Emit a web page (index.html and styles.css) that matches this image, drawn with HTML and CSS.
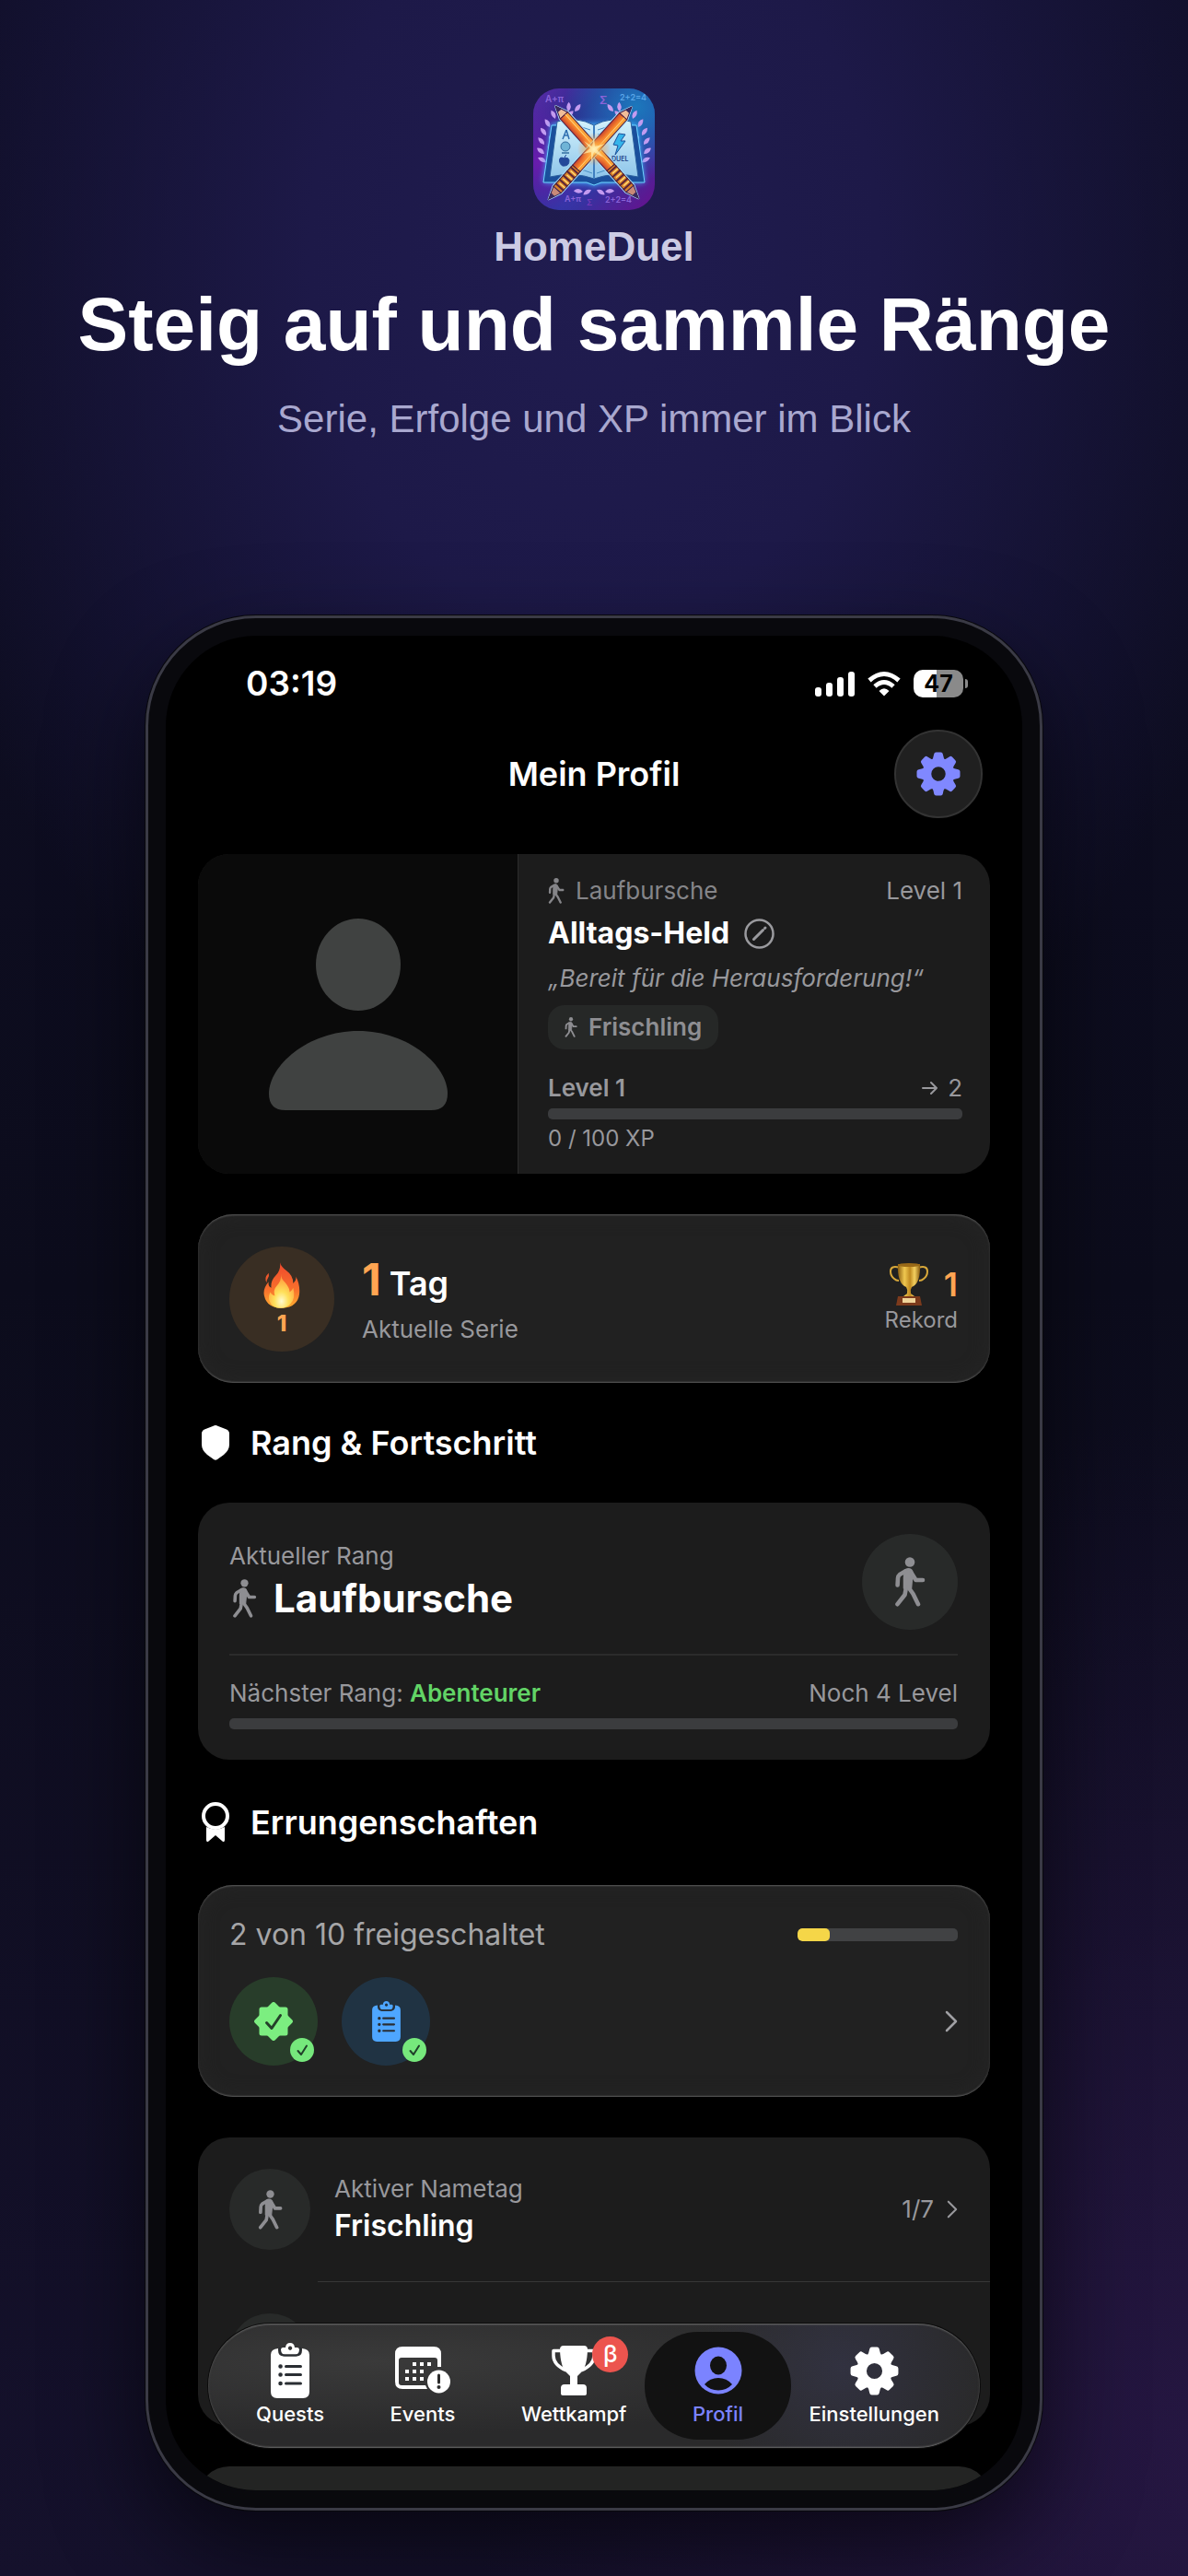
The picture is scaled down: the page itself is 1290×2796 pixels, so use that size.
FILE: index.html
```html
<!DOCTYPE html>
<html lang="de">
<head>
    <meta charset="UTF-8">
    <meta name="viewport" content="width=device-width, initial-scale=1.0">
    <title>HomeDuel</title>
    <link rel="stylesheet" href="styles.css">
</head>
<body>
    <!-- shared icons -->
    <svg class="sprite" aria-hidden="true">
        <symbol id="walk" viewBox="0 0 34 54">
            <circle cx="17" cy="5.500" r="5.300" fill="currentColor"/>
            <path d="M11.500 14 Q14 12 17 13 Q20 14 20 18 L18.500 34 L10.500 34 L10.500 22 Z" fill="currentColor" stroke="currentColor" stroke-width="1.500" stroke-linejoin="round"/>
            <g fill="none" stroke="currentColor" stroke-width="4.600" stroke-linecap="round" stroke-linejoin="round">
                <path d="M12 15.500 L6 19 Q4.200 20.500 4 23 L3.600 30.500"/>
                <path d="M18.500 17 L23.500 25 H31"/>
                <path d="M13 33 L11.500 41 L3.500 51.200"/>
                <path d="M15.500 33 L20.500 40 L26 51.200"/>
            </g>
        </symbol>
        <symbol id="gear" viewBox="-24 -24 48 48">
            <circle r="12.500" fill="none" stroke="currentColor" stroke-width="9.500"/>
            <g fill="currentColor">
                <path id="tooth" d="M-7.500 -14.500 Q-5.500 -17 -4.800 -21.500 Q-4.500 -23.500 -2.500 -23.500 H2.500 Q4.500 -23.500 4.800 -21.500 Q5.500 -17 7.500 -14.500 Z"/>
                <use href="#tooth" transform="rotate(45)"/>
                <use href="#tooth" transform="rotate(90)"/>
                <use href="#tooth" transform="rotate(135)"/>
                <use href="#tooth" transform="rotate(180)"/>
                <use href="#tooth" transform="rotate(225)"/>
                <use href="#tooth" transform="rotate(270)"/>
                <use href="#tooth" transform="rotate(315)"/>
            </g>
        </symbol>
        <symbol id="clipboard" viewBox="0 0 42 60">
            <path d="M8 6 V8 Q8 14.500 14 14.500 H28 Q34 14.500 34 8 V6 Q42 6.500 42 13 V53 Q42 60 35 60 H7 Q0 60 0 53 V13 Q0 6.500 8 6 Z" fill="currentColor"/>
            <path fill-rule="evenodd" d="M16 5 Q16.500 0 21 0 Q25.500 0 26 5 H29 Q31 5 31 7.500 Q31 12.500 27 12.500 H15 Q11 12.500 11 7.500 Q11 5 13 5 Z M21 3.500 a2.200 2.200 0 1 0 .1 0 Z" fill="currentColor"/>
            <g class="cut" stroke-width="3" stroke-linecap="round">
                <path d="M10 5.500 V7.500 Q10 13.500 15 13.500 H27 Q32 13.500 32 7.500 V5.500" stroke-width="2"/>
                <path d="M16.500 25.500 H32.500 M16.500 34.500 H32.500 M16.500 44 H32.500"/>
                <path d="M10.500 25.500 h.1 M10.500 34.500 h.1 M10.500 44 h.1" stroke-width="4.500"/>
            </g>
        </symbol>
        <symbol id="check" viewBox="0 0 26 26">
            <circle cx="13" cy="13" r="13" fill="#76e87c"/>
            <path d="M8.500 14 L12 18 L18 8.500" fill="none" stroke="#20402a" stroke-width="2" stroke-linecap="round" stroke-linejoin="round"/>
        </symbol>
        <symbol id="chevron" viewBox="0 0 14 24">
            <path d="M2 2 L12 12 L2 22" fill="none" stroke="currentColor" stroke-width="2.500" stroke-linecap="round" stroke-linejoin="round"/>
        </symbol>
    </svg>

    <div class="page">
        <header class="hero">
            <svg class="logo" viewBox="0 0 132 132" role="img" aria-label="HomeDuel Logo">
                <defs>
                    <linearGradient id="bg" x1="0" y1="0" x2="1" y2="1">
                        <stop offset="0" stop-color="#5a2ba8"/>
                        <stop offset=".3" stop-color="#2c2a8c"/>
                        <stop offset=".6" stop-color="#2b3aa5"/>
                        <stop offset="1" stop-color="#6a0f8c"/>
                    </linearGradient>
                    <radialGradient id="cyan" cx=".85" cy=".15" r=".6">
                        <stop offset="0" stop-color="#1c78bc"/>
                        <stop offset="1" stop-color="#1c78bc" stop-opacity="0"/>
                    </radialGradient>
                    <radialGradient id="violet" cx=".05" cy=".6" r=".5">
                        <stop offset="0" stop-color="#6a1cae"/>
                        <stop offset="1" stop-color="#6a1cae" stop-opacity="0"/>
                    </radialGradient>
                    <radialGradient id="spark">
                        <stop offset="0" stop-color="#fff6c8"/>
                        <stop offset=".35" stop-color="#ffb84a" stop-opacity=".7"/>
                        <stop offset="1" stop-color="#ff8c3a" stop-opacity="0"/>
                    </radialGradient>
                    <linearGradient id="sheet" x1="0" y1="0" x2="0" y2="1">
                        <stop offset="0" stop-color="#d4f2fb"/>
                        <stop offset="1" stop-color="#8cc4ea"/>
                    </linearGradient>
                    <linearGradient id="wood" x1="0" y1="0" x2="0" y2="1">
                        <stop offset="0" stop-color="#ffb33c"/>
                        <stop offset=".5" stop-color="#f5802a"/>
                        <stop offset="1" stop-color="#c8432f"/>
                    </linearGradient>
                    <filter id="glow" x="-20%" y="-20%" width="140%" height="140%">
                        <feGaussianBlur stdDeviation="3"/>
                    </filter>
                    <clipPath id="tile"><rect width="132" height="132" rx="28"/></clipPath>
                    <g id="pencil">
                        <path d="M0 0 L14 -6 H121 L135 0 L121 6 H14 Z" fill="#9fe0ff" stroke="#a9e4ff" stroke-width="2" stroke-linejoin="round"/>
                        <path d="M0 0 L14 -5.500 V5.500 Z" fill="#f0bd98" stroke="#3a1c4e" stroke-width="1"/>
                        <path d="M0 0 L7 -3 V3 Z" fill="#3a2a5c"/>
                        <path d="M14 -5.500 H90 V5.500 H14 Z" fill="url(#wood)" stroke="#5a1f3c" stroke-width="1"/>
                        <path d="M14 -2 H90" stroke="#ffd27a" stroke-width="1"/>
                        <path d="M90 -5.500 H121 V5.500 H90 Z" fill="#d9822a" stroke="#4a1c34" stroke-width="1"/>
                        <path d="M93 -6 V6 M99 -6 V6 M105 -6 V6 M111 -6 V6 M117 -6 V6" stroke="#5a2438" stroke-width="2"/>
                        <path d="M96 -5 V3 M102 -5 V3 M108 -5 V3 M114 -5 V3" stroke="#ffd873" stroke-width="1.500"/>
                        <path d="M121 -5.500 L135 0 L121 5.500 Z" fill="#c98a78" stroke="#3a1c4e" stroke-width="1"/>
                        <path d="M128 -3 L135 0 L128 3 Z" fill="#3a2a5c"/>
                    </g>
                    <path id="leaf" d="M0 0 Q-5 -4 -2 -10 Q4 -6 0 0 Z"/>
                    <g id="laurel" fill="#c49bf0">
                        <use href="#leaf" transform="translate(45 25) rotate(50)"/>
                        <use href="#leaf" transform="translate(38 25) rotate(15)"/>
                        <use href="#leaf" transform="translate(36 31) rotate(60)"/>
                        <use href="#leaf" transform="translate(24 33) rotate(-15)"/>
                        <use href="#leaf" transform="translate(18 42) rotate(-20)"/>
                        <use href="#leaf" transform="translate(14 51) rotate(-25)"/>
                        <use href="#leaf" transform="translate(12 61) rotate(-30)"/>
                        <use href="#leaf" transform="translate(12 71) rotate(-40)"/>
                        <use href="#leaf" transform="translate(14 80) rotate(-50)"/>
                        <use href="#leaf" transform="translate(18 58) rotate(25)"/>
                        <use href="#leaf" transform="translate(17 68) rotate(20)"/>
                        <use href="#leaf" transform="translate(17 78) rotate(15)"/>
                        <use href="#leaf" transform="translate(54 112) rotate(-75)"/>
                        <use href="#leaf" transform="translate(63 110) rotate(-110)"/>
                    </g>
                </defs>
                <g clip-path="url(#tile)">
                    <rect width="132" height="132" fill="url(#bg)"/>
                    <rect width="132" height="132" fill="url(#cyan)"/>
                    <rect width="132" height="132" fill="url(#violet)"/>
                    <g class="logo-text" fill="#8a63d8">
                        <text x="13" y="15" font-size="10">A+π</text>
                        <text x="72" y="17" font-size="12">Σ</text>
                        <text x="94" y="13" font-size="9" fill="#5aa6e8">2+2=4</text>
                        <text x="34" y="123" font-size="9">A+π</text>
                        <text x="58" y="127" font-size="9" fill="#7438b8">Σ</text>
                        <text x="78" y="124" font-size="9">2+2=4</text>
                    </g>
                    <use href="#laurel"/>
                    <use href="#laurel" transform="matrix(-1 0 0 1 132 0)"/>
                    <path d="M20 38 L11 102 L60 103 L66 106 L72 103 L121 102 L112 38 Z" fill="#3fb4ff" filter="url(#glow)"/>
                    <path d="M20 40 L11 102 L58 102 L66 105 L74 102 L121 102 L112 40 Z" fill="#1a4f9c" stroke="#6fd4ff" stroke-width="1"/>
                    <path d="M26 36 Q48 30 66 40 V98 Q44 90 18 96 Z" fill="url(#sheet)" stroke="#2a5f9e" stroke-width="1"/>
                    <path d="M106 36 Q84 30 66 40 V98 Q88 90 114 96 Z" fill="url(#sheet)" stroke="#2a5f9e" stroke-width="1"/>
                    <path d="M66 40 V98" stroke="#3f7fc0" stroke-width="2"/>
                    <g fill="none" stroke="#4a8fc4" stroke-width="1">
                        <path d="M44 42 Q54 41 62 45 M88 42 Q78 41 70 45 M86 46 Q78 46 70 50 M50 52 L62 54 M46 88 Q56 88 64 92 M86 88 Q78 88 69 92"/>
                    </g>
                    <path d="M36 45 L32 55 M36 45 L39 55 M33 51 H38" fill="none" stroke="#2f6fb0" stroke-width="1.500"/>
                    <circle cx="35" cy="63" r="5" fill="#6fb4d6" stroke="#356fa0" stroke-width="1"/>
                    <path d="M31 70 H39" stroke="#356fa0" stroke-width="1.500"/>
                    <path d="M34 76 Q28 73 28.500 79 Q30 85 34 84 Q39 84 39 78 Q38 74 34 76 Q34 73 36 72" fill="#23489a" stroke="#23489a" stroke-width="1"/>
                    <path d="M93 49 L87 61 L92 62 L89 72 L100 57 L95 57 L100 50 Z" fill="#35b4ea" stroke="#1b4f9a" stroke-width="1"/>
                    <text class="logo-text" x="85" y="79" font-size="7" fill="#1b3f86">DUEL</text>
                    <use href="#pencil" transform="translate(24 19) rotate(48)"/>
                    <use href="#pencil" transform="translate(107 20) rotate(132)"/>
                    <circle cx="66" cy="66" r="18" fill="url(#spark)"/>
                    <path d="M66 52 L67 63 L78 60 L69 66 L76 75 L66 69 L63 80 L63 69 L54 71 L62 65 L55 57 L64 63 Z" fill="#fff0b0" opacity=".7"/>
                </g>
            </svg>
            <p class="brand">HomeDuel</p>
            <h1>Steig auf und sammle Ränge</h1>
            <p class="tagline">Serie, Erfolge und XP immer im Blick</p>
        </header>

        <main class="phone">
            <div class="screen">
                <div class="status">
                    <span class="time">03:19</span>
                    <div class="status-icons">
                        <svg width="43" height="28" viewBox="0 0 43 28" fill="#fff">
                            <rect y="18" width="7" height="10" rx="3"/>
                            <rect x="12" y="13" width="7" height="15" rx="3"/>
                            <rect x="24" y="7" width="7" height="21" rx="3"/>
                            <rect x="36" y="1" width="7" height="27" rx="3"/>
                        </svg>
                        <svg width="36" height="28" viewBox="0 0 36 28" fill="none" stroke="#fff" stroke-width="5">
                            <path d="M2 10.500 Q18 -3.500 34 10.500"/>
                            <path d="M8 17 Q18 8 28 17"/>
                            <path d="M18 27.500 L12.500 22 Q18 16.500 23.500 22 Z" fill="#fff" stroke="none"/>
                        </svg>
                        <div class="battery"><span>47</span></div>
                    </div>
                </div>

                <div class="navbar">
                    <h2>Mein Profil</h2>
                    <button class="gear-btn" aria-label="Einstellungen öffnen"><svg width="48" height="48"><use href="#gear"/></svg></button>
                </div>

                <div class="content">
                    <section class="card profile">
                        <div class="avatar">
                            <svg width="194" height="208" viewBox="0 0 194 208" fill="#404241">
                                <ellipse cx="97" cy="50" rx="46" ry="50"/>
                                <path d="M97 122 C152 122 194 160 194 190 Q194 208 176 208 H18 Q0 208 0 190 C0 160 42 122 97 122 Z"/>
                            </svg>
                        </div>
                        <div class="info">
                            <div class="row muted">
                                <span class="rank"><svg width="18" height="28"><use href="#walk"/></svg>Laufbursche</span>
                                <span>Level 1</span>
                            </div>
                            <div class="name">
                                Alltags-Held
                                <svg width="33" height="33" viewBox="0 0 33 33" fill="none" stroke="#9a9a9e">
                                    <circle cx="16.500" cy="16.500" r="15" stroke-width="2.500"/>
                                    <path d="M10.500 22.500 L20.500 12.500" stroke-width="3" stroke-linecap="round"/>
                                    <path d="M22.500 10.500 L23 10" stroke-width="3" stroke-linecap="round"/>
                                </svg>
                            </div>
                            <p class="quote">„Bereit für die Herausforderung!“</p>
                            <span class="nametag"><svg width="14" height="22"><use href="#walk"/></svg>Frischling</span>
                            <div class="row muted level">
                                <strong>Level 1</strong>
                                <span class="next"><svg width="18" height="16" viewBox="0 0 18 16" fill="none" stroke="currentColor" stroke-width="2" stroke-linecap="round" stroke-linejoin="round"><path d="M1 8 H16 M10 2 L16 8 L10 14"/></svg>2</span>
                            </div>
                            <div class="bar"></div>
                            <p class="xp">0 / 100 XP</p>
                        </div>
                    </section>

                    <section class="card glass streak">
                        <div class="flame">
                            <svg width="40" height="50" viewBox="0 0 42 52">
                                <defs>
                                    <linearGradient id="fire" x1="0" y1="0" x2="0" y2="1">
                                        <stop offset="0" stop-color="#f0482c"/>
                                        <stop offset=".6" stop-color="#f8702c"/>
                                        <stop offset="1" stop-color="#ffae30"/>
                                    </linearGradient>
                                    <radialGradient id="core" cx=".5" cy=".8" r=".7">
                                        <stop offset="0" stop-color="#fffbd0"/>
                                        <stop offset=".4" stop-color="#ffe05a"/>
                                        <stop offset="1" stop-color="#ff9a3c"/>
                                    </radialGradient>
                                </defs>
                                <path d="M19 0 Q20 5 27 10 Q34 15 34 24 Q38 21 37 16 Q42 25 41 36 Q39 51 22 52 Q4 52 1 38 Q-1 30 6 22 Q5 27 9 29 Q8 21 14 15 Q20 9 19 0 Z" fill="url(#fire)"/>
                                <path d="M6 12 Q7 15 5 18 Q3 21 4 23 Q0 18 6 12 Z" fill="#f0582c"/>
                                <path d="M20 13 Q20 19 25 23 Q30 29 30 34 Q33 32 34 29 Q37 41 31 47 Q27 52 20 52 Q10 52 7 44 Q5 39 8 34 Q10 38 13 38 Q11 31 15 27 Q21 21 20 13 Z" fill="url(#core)"/>
                            </svg>
                            <span>1</span>
                        </div>
                        <div class="streak-text">
                            <p class="count"><b>1</b> Tag</p>
                            <p class="muted">Aktuelle Serie</p>
                        </div>
                        <div class="record">
                            <p class="best">
                                <svg width="44" height="46" viewBox="0 0 44 46">
                                    <defs>
                                        <linearGradient id="gold" x1="0" y1="0" x2="1" y2="0">
                                            <stop offset="0" stop-color="#8a5c10"/>
                                            <stop offset=".3" stop-color="#f0c850"/>
                                            <stop offset=".55" stop-color="#c08a20"/>
                                            <stop offset=".75" stop-color="#f4d060"/>
                                            <stop offset="1" stop-color="#8a5c10"/>
                                        </linearGradient>
                                    </defs>
                                    <path d="M12 5 Q2 2 2 9 Q2 14 6 17 Q8 19 11 19 M32 5 Q42 2 42 9 Q42 14 38 17 Q36 19 33 19" fill="none" stroke="#d8a83a" stroke-width="2"/>
                                    <path d="M10 1 H34 Q35 22 25 26 Q23 29 24 33 L28 36 H16 L20 33 Q21 29 19 26 Q9 22 10 1 Z" fill="url(#gold)"/>
                                    <ellipse cx="22" cy="2" rx="12" ry="2" fill="#9a6a18"/>
                                    <path d="M10 36 H34 L36 46 H8 Z" fill="#7c3a1c"/>
                                    <rect x="15" y="38" width="14" height="5" fill="#f0d49a"/>
                                </svg>
                                1
                            </p>
                            <p class="muted small">Rekord</p>
                        </div>
                    </section>

                    <h3>
                        <svg width="32" height="38" viewBox="0 0 32 38"><path d="M16 0 Q17 0 19 1 L28 4.500 Q31 6 31 9 V21 Q31 27 25 32 L18 37 Q16 38.500 14 37 L7 32 Q1 27 1 21 V9 Q1 6 4 4.500 L13 1 Q15 0 16 0 Z" fill="#fff"/></svg>
                        Rang &amp; Fortschritt
                    </h3>

                    <section class="card rank-card">
                        <div class="row">
                            <div>
                                <p class="muted">Aktueller Rang</p>
                                <p class="rank-name"><svg width="27" height="42"><use href="#walk"/></svg>Laufbursche</p>
                            </div>
                            <div class="circle big"><svg width="34" height="54"><use href="#walk"/></svg></div>
                        </div>
                        <hr>
                        <div class="row muted">
                            <span>Nächster Rang: <strong class="green">Abenteurer</strong></span>
                            <span>Noch 4 Level</span>
                        </div>
                        <div class="bar"></div>
                    </section>

                    <h3>
                        <svg width="32" height="48" viewBox="0 0 32 48">
                            <circle cx="16" cy="17" r="13" fill="none" stroke="#fff" stroke-width="4"/>
                            <path d="M6 29 Q16 34 26 29 V43 Q26 46 23.500 44.500 L16 38 L8.500 44.500 Q6 46 6 43 Z" fill="#fff"/>
                        </svg>
                        Errungenschaften
                    </h3>

                    <section class="card glass awards">
                        <div class="row">
                            <p class="unlocked">2 von 10 freigeschaltet</p>
                            <div class="bar short"><span style="width: 20%"></span></div>
                        </div>
                        <div class="award-row">
                            <div class="award green-bg">
                                <svg width="42" height="42" viewBox="-21 -21 42 42">
                                    <g fill="#7cee80" stroke="#7cee80" stroke-width="5" stroke-linejoin="round">
                                        <rect x="-13" y="-13" width="26" height="26"/>
                                        <rect x="-13" y="-13" width="26" height="26" transform="rotate(45)"/>
                                    </g>
                                    <path d="M-7.500 1.500 L-2 7.500 L7.500 -6.500" fill="none" stroke="#24402a" stroke-width="3" stroke-linecap="round" stroke-linejoin="round"/>
                                </svg>
                                <svg class="done"><use href="#check"/></svg>
                            </div>
                            <div class="award blue-bg">
                                <svg width="31" height="44"><use href="#clipboard"/></svg>
                                <svg class="done"><use href="#check"/></svg>
                            </div>
                            <svg class="chev" width="14" height="24"><use href="#chevron"/></svg>
                        </div>
                    </section>

                    <section class="card tags">
                        <div class="tag-row">
                            <div class="circle"><svg width="27" height="43"><use href="#walk"/></svg></div>
                            <div class="tag-text">
                                <p class="muted">Aktiver Nametag</p>
                                <p class="tag-name">Frischling</p>
                            </div>
                            <span class="tag-count muted">1/7 <svg width="12" height="20"><use href="#chevron"/></svg></span>
                        </div>
                        <div class="line"></div>
                        <div class="tag-row"><div class="circle"></div></div>
                    </section>

                    <section class="card more"></section>
                </div>

                <nav class="tabbar">
                    <a class="tab" href="#quests">
                        <span class="icon"><svg width="42" height="60"><use href="#clipboard"/></svg></span>
                        Quests
                    </a>
                    <a class="tab" href="#events">
                        <span class="icon"><svg width="60" height="52" viewBox="0 0 60 52">
                            <path d="M8 0 H42 Q50 0 50 8 V22 H46 V15 Q46 12 43 12 H7 Q4 12 4 15 V39 Q4 42 7 42 H33 L35 46 H8 Q0 46 0 38 V8 Q0 0 8 0 Z" fill="#fff"/>
                            <g fill="#fff">
                                <rect x="19" y="17" width="4" height="4"/><rect x="27" y="17" width="4" height="4"/><rect x="35" y="17" width="4" height="4"/>
                                <rect x="11" y="25" width="4" height="4"/><rect x="19" y="25" width="4" height="4"/><rect x="27" y="25" width="4" height="4"/>
                                <rect x="11" y="33" width="4" height="4"/><rect x="19" y="33" width="4" height="4"/><rect x="27" y="33" width="4" height="4"/>
                            </g>
                            <circle cx="47.500" cy="38" r="12.500" fill="#fff"/>
                            <path d="M47.500 31 V39" stroke="#2c2c2c" stroke-width="3" stroke-linecap="round"/>
                            <circle cx="47.500" cy="44" r="2" fill="#2c2c2c"/>
                        </svg></span>
                        Events
                    </a>
                    <a class="tab" href="#wettkampf">
                        <span class="icon">
                            <svg width="48" height="56" viewBox="0 0 48 56">
                                <path d="M11 6.500 H2 V12 Q2 22 16 28 M37 6.500 H46 V12 Q46 22 32 28" fill="none" stroke="#fff" stroke-width="3.500" stroke-linejoin="round"/>
                                <path d="M13 1 H35 Q39 1 39 5 Q38.500 24 32 30 L28 34 V43 H34 Q38 43 38 47 V53 Q38 55 36 55 H12 Q10 55 10 53 V47 Q10 43 14 43 H20 V34 L16 30 Q9.500 24 9 5 Q9 1 13 1 Z" fill="#fff"/>
                            </svg>
                            <span class="beta">β</span>
                        </span>
                        Wettkampf
                    </a>
                    <a class="tab active" href="#profil" aria-current="page">
                        <span class="icon"><svg width="52" height="52" viewBox="0 0 52 52">
                            <circle cx="26" cy="26" r="25.500" fill="#7b83ff"/>
                            <ellipse cx="26" cy="20.500" rx="9" ry="10" fill="#121212"/>
                            <path d="M11 41 Q17 34 26 34 Q35 34 41 41 Q35 47.500 26 47.500 Q17 47.500 11 41 Z" fill="#121212"/>
                        </svg></span>
                        Profil
                    </a>
                    <a class="tab" href="#einstellungen">
                        <span class="icon"><svg width="53" height="53"><use href="#gear"/></svg></span>
                        Einstellungen
                    </a>
                </nav>
            </div>
        </main>
    </div>
</body>
</html>
```
FILE: styles.css
```css
* {
    box-sizing: border-box;
}
body {
    margin: 0;
    font-family: 'Inter', 'Roboto', sans-serif;
    color: #fff;
    background: #0c0b1e;
}
h1, h2, h3, p {
    margin: 0;
}
svg {
    flex-shrink: 0;
}
.sprite {
    position: absolute;
    width: 0;
    height: 0;
}
.page {
    height: 100vh;
    display: flex;
    flex-direction: column;
    padding: 96px 158px 71px;
    background:
        radial-gradient(ellipse 60% 40% at 100% 95%, rgba(48, 26, 80, 0.6), rgba(48, 26, 80, 0)),
        radial-gradient(ellipse 60% 36% at 50% 10%, #201c50, #1d1948 40%, rgba(29, 25, 72, 0)),
        linear-gradient(180deg, #0f0e26, #0c0c1c 50%, #15112c);
}

/* hero */
.hero {
    display: flex;
    flex-direction: column;
    align-items: center;
    font-family: 'Liberation Sans', Arial, sans-serif;
    white-space: nowrap;
    margin-bottom: 188px;
}
.logo {
    width: 132px;
    height: 132px;
}
.logo-text {
    font-family: 'Inter', sans-serif;
    font-weight: 600;
}
.brand {
    margin-top: 14px;
    font-size: 44px;
    line-height: 52px;
    font-weight: bold;
    color: #cccbe4;
}
h1 {
    margin-top: 10px;
    font-size: 82px;
    line-height: 96px;
}
.tagline {
    margin-top: 30px;
    font-size: 42px;
    line-height: 50px;
    color: #a9a8cf;
}

/* phone */
.phone {
    flex: 1;
    min-height: 0;
    padding: 19px;
    background: #09090d;
    border: 3px solid #3a3a45;
    border-radius: 120px;
    box-shadow: 0 0 0 1px #08080c, 0 40px 100px rgba(0, 0, 0, 0.6);
}
.screen {
    position: relative;
    height: 100%;
    overflow: hidden;
    background: #000;
    border-radius: 98px;
}
.status {
    display: flex;
    justify-content: space-between;
    align-items: center;
    padding: 30px 59px 0 87px;
}
.time {
    font-size: 37px;
    line-height: 44px;
    font-weight: 600;
}
.status-icons {
    display: flex;
    align-items: center;
    gap: 14px;
}
.battery {
    position: relative;
    width: 54px;
    height: 30px;
    margin-right: 5px;
    border-radius: 10px;
    background: linear-gradient(90deg, #fff 47%, #8a8a8a 47%);
    color: #000;
    font-size: 25px;
    line-height: 30px;
    font-weight: 700;
    text-align: center;
}
.battery::after {
    content: '';
    position: absolute;
    right: -5px;
    top: 10px;
    width: 3px;
    height: 10px;
    border-radius: 0 5px 5px 0;
    background: #8a8a8a;
}
.navbar {
    display: grid;
    grid-template-columns: 96px 1fr 96px;
    align-items: center;
    padding: 28px 43px 39px;
}
h2 {
    grid-column: 2;
    font-size: 36px;
    line-height: 44px;
    font-weight: 600;
    text-align: center;
}
.gear-btn {
    display: flex;
    align-items: center;
    justify-content: center;
    width: 96px;
    height: 96px;
    padding: 0;
    border: 2px solid #333;
    border-radius: 50%;
    background: #202020;
    color: #8088ff;
}
.content {
    display: flex;
    flex-direction: column;
    gap: 44px;
    padding: 0 35px;
}

/* cards */
.card {
    flex-shrink: 0;
    border-radius: 34px;
    background: #1c1c1c;
    font-size: 26px;
    line-height: 32px;
}
.glass {
    background: #212121;
    border-radius: 38px;
    box-shadow: inset 0 2px 2px -1px #5a5a5a, inset 0 -2px 2px -1px #5a5a5a, inset 0 0 3px #303030, inset 0 0 20px #262626;
}
.row {
    display: flex;
    justify-content: space-between;
    align-items: center;
}
.muted {
    color: #98989c;
}
.bar {
    height: 12px;
    border-radius: 5px;
    background: #3b3c3e;
}
.circle {
    display: flex;
    align-items: center;
    justify-content: center;
    width: 88px;
    height: 88px;
    border-radius: 50%;
    background: #282a29;
    color: #8e8e92;
}
.circle.big {
    width: 104px;
    height: 104px;
}

.profile {
    display: flex;
    overflow: hidden;
}
.avatar {
    display: flex;
    align-items: center;
    justify-content: center;
    width: 348px;
    background: #0a0a0a;
    border-right: 1px solid #2c2c2c;
}
.info {
    flex: 1;
    padding: 24px 30px 22px 32px;
}
.rank {
    display: flex;
    align-items: center;
    gap: 12px;
    color: #858589;
}
.name {
    display: flex;
    align-items: center;
    gap: 16px;
    margin-top: 10px;
    font-size: 32px;
    line-height: 40px;
    font-weight: 700;
}
.quote {
    margin-top: 13px;
    font-style: italic;
    color: #98989c;
}
.nametag {
    display: flex;
    align-items: center;
    gap: 12px;
    width: fit-content;
    height: 48px;
    margin-top: 13px;
    padding: 0 18px;
    border-radius: 18px;
    background: #262827;
    color: #8e8e92;
    font-weight: 600;
}
.level {
    margin: 26px 0 6px;
}
strong {
    font-weight: 600;
}
.next {
    display: flex;
    align-items: center;
    gap: 10px;
}
.small, .xp {
    font-size: 24px;
}
.xp {
    margin-top: 5px;
    color: #98989c;
}

.streak {
    display: flex;
    align-items: center;
    padding: 35px 35px 34px 34px;
}
.flame {
    display: flex;
    flex-direction: column;
    align-items: center;
    gap: 3px;
    width: 114px;
    height: 114px;
    padding-top: 17px;
    border-radius: 50%;
    background: #392e23;
    color: #ffa552;
    font-size: 24px;
    line-height: 28px;
    font-weight: 800;
}
.streak-text {
    flex: 1;
    margin-left: 30px;
}
.count {
    margin-bottom: 6px;
    font-size: 36px;
    line-height: 56px;
    font-weight: 600;
}
.count b {
    font-size: 48px;
    font-weight: 700;
    color: #ffa552;
}
.record {
    text-align: right;
}
.best {
    display: flex;
    align-items: center;
    justify-content: flex-end;
    gap: 16px;
    font-size: 36px;
    line-height: 46px;
    font-weight: 600;
    color: #ffa552;
}

h3 {
    display: flex;
    align-items: center;
    gap: 22px;
    padding-left: 3px;
    font-size: 36px;
    line-height: 42px;
    font-weight: 600;
}

.rank-card {
    padding: 34px 35px 33px 34px;
}
.rank-name {
    display: flex;
    align-items: center;
    gap: 18px;
    margin-top: 4px;
    padding-left: 3px;
    font-size: 42px;
    line-height: 52px;
    font-weight: 700;
}
.rank-name svg {
    color: #8e8e92;
}
hr {
    height: 2px;
    margin: 26px 0 25px;
    border: 0;
    background: #2b2b2b;
}
.green {
    color: #62d466;
}
.rank-card .bar {
    margin-top: 11px;
}

.awards {
    padding: 34px 35px 34px 34px;
}
.unlocked {
    font-size: 32px;
    line-height: 40px;
    color: #a6a6a8;
}
.short {
    width: 174px;
    height: 14px;
    overflow: hidden;
    background: #414244;
}
.short span {
    display: block;
    height: 100%;
    border-radius: 5px;
    background: #f5d648;
}
.award-row {
    display: flex;
    align-items: center;
    gap: 26px;
    margin-top: 26px;
}
.award {
    position: relative;
    display: flex;
    align-items: center;
    justify-content: center;
    width: 96px;
    height: 96px;
    border-radius: 50%;
}
.green-bg {
    background: #283d2a;
}
.blue-bg {
    background: #203343;
    color: #4ea6ff;
}
.cut {
    fill: none;
    stroke: #2a2e33;
}
.done {
    position: absolute;
    right: 4px;
    bottom: 4px;
    width: 26px;
    height: 26px;
}
.chev {
    margin-left: auto;
    color: #a0a0a4;
}

.tag-row {
    display: flex;
    align-items: center;
    gap: 26px;
    padding: 34px 35px 34px 34px;
}
.tag-text {
    flex: 1;
}
.tag-name {
    margin-top: 4px;
    font-size: 32px;
    line-height: 40px;
    font-weight: 600;
}
.tag-count {
    display: flex;
    align-items: center;
    gap: 14px;
}
.line {
    height: 1px;
    margin-left: 130px;
    background: #363636;
}
.more {
    height: 200px;
    background: #232423;
}

/* tab bar */
.tabbar {
    position: absolute;
    left: 46px;
    right: 46px;
    bottom: 46px;
    display: flex;
    justify-content: space-between;
    padding: 9px 44px 9px 52px;
    border-radius: 68px;
    background:
        radial-gradient(circle at 82% 35%, rgba(50, 50, 66, 0.9), rgba(50, 50, 66, 0) 22%),
        radial-gradient(ellipse at 22% 30%, #3a3a3a, #2a2a2b 60%);
    box-shadow: inset 0 2px 2px -1px #6a6a6a, inset 0 -2px 2px -1px #6a6a6a, inset 0 0 3px #444, 0 0 0 1px #0c0c0c;
}
.tab {
    display: flex;
    flex-direction: column;
    align-items: center;
    gap: 3px;
    padding: 12px 0 14px;
    font-size: 22px;
    line-height: 28px;
    font-weight: 500;
    color: #fff;
    text-decoration: none;
}
.tab.active {
    margin: 0 -52px;
    padding-left: 52px;
    padding-right: 52px;
    border-radius: 58px;
    background: #121212;
    color: #7b83ff;
}
.icon {
    position: relative;
    display: flex;
    align-items: center;
    height: 60px;
}
.beta {
    position: absolute;
    left: 44px;
    top: -7px;
    width: 39px;
    height: 39px;
    border-radius: 50%;
    background: #ec544e;
    font-size: 26px;
    line-height: 38px;
    text-align: center;
}
```
